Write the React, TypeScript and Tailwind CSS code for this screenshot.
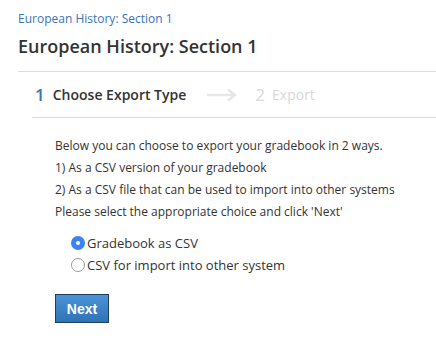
import React from "react";

export default function App() {
  return (
    <div className="w-[436px] h-[339px] bg-white overflow-hidden text-[#333]" style={{ fontFamily: '"Open Sans", sans-serif' }}>
      <div className="pl-[18px] pt-[10px]">
        <div className="text-[12px] leading-[17px] text-[#3b73b9]">European History: Section 1</div>
        <h1 className="mt-[7px] text-[18px] leading-[24px] font-semibold text-[#333]">European History: Section 1</h1>
        <div className="mt-[13px] border-t border-[#dddddd]" />
        <div className="ml-[14px]">
          <div className="flex items-center h-[45px] pl-[3px]">
            <span className="text-[17px] font-semibold text-[#3b73b9]">1</span>
            <span className="ml-[8px] text-[14px] font-semibold text-[#333]">Choose Export Type</span>
            <svg className="ml-[21px]" width="31" height="14" viewBox="0 0 31 14">
              <path d="M0 7 H28 M21 1.5 L28 7 L21 12.5" stroke="#e6e6e6" strokeWidth="2.4" fill="none" />
            </svg>
            <span className="ml-[17px] text-[17px] text-[#d8d8d8]">2</span>
            <span className="ml-[7px] text-[14px] text-[#d8d8d8]">Export</span>
          </div>
          <div className="border-t border-[#dddddd]" />
        </div>
        <div className="pl-[37px] pt-[17px] text-[12px] leading-[22px] text-[#333]">
          <p>Below you can choose to export your gradebook in 2 ways.</p>
          <p>1) As a CSV version of your gradebook</p>
          <p>2) As a CSV file that can be used to import into other systems</p>
          <p>Please select the appropriate choice and click 'Next'</p>
          <div className="pl-[16px] pt-[9px] text-[13px] leading-[22px]">
            <label className="flex items-center gap-[2px]">
              <span className="w-[14px] h-[14px] rounded-full bg-[#3b82f6] flex items-center justify-center">
                <span className="w-[4px] h-[4px] rounded-full bg-white" />
              </span>
              <span>Gradebook as CSV</span>
            </label>
            <label className="flex items-center gap-[2px]">
              <span className="w-[14px] h-[14px] rounded-full border border-[#9a9a9a] bg-white" />
              <span>CSV for import into other system</span>
            </label>
          </div>
          <button
            className="mt-[18px] w-[54px] h-[29px] border border-[#1f3f5f] bg-gradient-to-b from-[#4b93d8] to-[#2f73b5] text-white text-[14px] font-bold"
            style={{ fontFamily: '"Liberation Sans", Arial, sans-serif' }}
          >
            Next
          </button>
        </div>
      </div>
    </div>
  );
}
